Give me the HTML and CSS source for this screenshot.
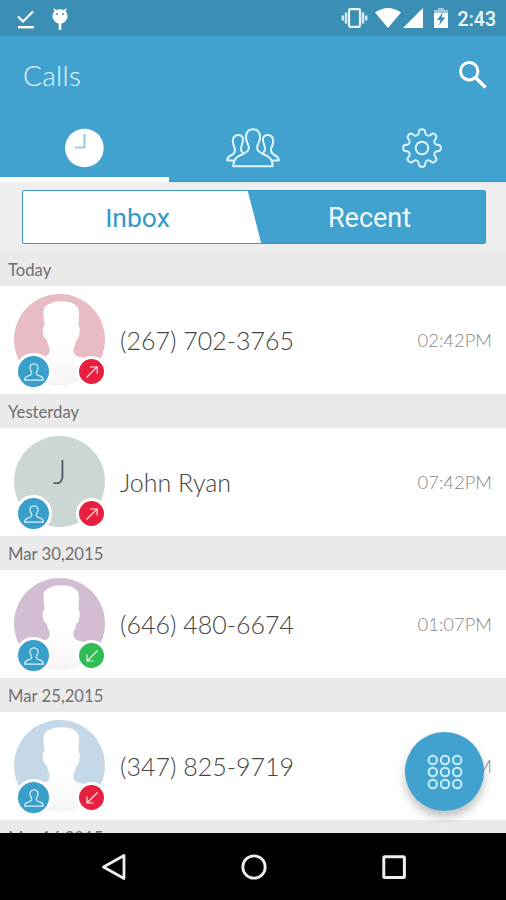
FILE: index.html
```
<!DOCTYPE html>
<html lang="en">
<head>
    <meta charset="UTF-8">
    <meta name="viewport" content="width=device-width, initial-scale=1.0">
    <title>Calls</title>
    <link rel="stylesheet" href="styles.css">
</head>
<body>
    <!-- shared shapes -->
    <svg class="defs" width="0" height="0">
        <defs>
            <linearGradient id="bodyFade" x1="0" y1="0" x2="0" y2="1">
                <stop offset="0.55" stop-color="#ffffff"/>
                <stop offset="1" stop-color="#f5f5f5"/>
            </linearGradient>
            <clipPath id="round"><circle cx="45.5" cy="45.5" r="45.5"/></clipPath>
            <symbol id="face" viewBox="0 0 91 91">
                <g clip-path="url(#round)">
                    <path fill="url(#bodyFade)" d="M30.500 32 L29.500 20 Q29 14 32 12 Q34 9.500 37 9.500 Q40 7 47 7.200 Q55 7.200 59 9.500 Q65 12.500 65 18 L64.500 32 Q66.500 33 65.500 39 Q64.800 45 62.500 45.500 Q61.500 51 59.500 54 L59.500 58 Q60.500 62 66 63 Q80 65 86 74 L88 91 L3 91 L5 74 Q11 65 28 63 Q34.500 62 35.500 58 L35.500 54 Q33.500 51 32.800 45.500 Q30 45 28.800 39 Q28 33 30.500 32 Z"/>
                </g>
            </symbol>
            <symbol id="person" viewBox="0 0 20 18">
                <path fill="none" stroke="#d9f3ff" stroke-width="1.200" stroke-linejoin="round" d="M10 .8 C7 .8 5.800 2.800 6 5.200 C6.100 7 6.900 7.800 7.500 9 C8.300 11.200 7.200 12 4.500 12.900 C2 13.600 .7 14.300 .7 17.200 H19.300 C19.300 14.300 18 13.600 15.500 12.900 C12.800 12 11.700 11.200 12.500 9 C13.100 7.800 13.900 7 14 5.200 C14.200 2.800 13 .8 10 .8 Z"/>
            </symbol>
            <symbol id="arrowOut" viewBox="0 0 14 14">
                <path fill="none" stroke="#ffdfe5" stroke-width="1.200" d="M1.500 12.500 L12.500 1.500 M5 2 H12.200 V8.500"/>
            </symbol>
            <symbol id="arrowIn" viewBox="0 0 14 14">
                <path fill="none" stroke="#ffe6ea" stroke-width="1.200" d="M12.500 1.500 L2 12 M2 5.500 V12 H8.500"/>
            </symbol>
            <path id="tooth" d="M-5.200 -12.500 Q-3.600 -13.200 -3.300 -15.200 L-3 -17 Q-2.600 -18.800 0 -18.800 Q2.600 -18.800 3 -17 L3.300 -15.200 Q3.600 -13.200 5.200 -12.500"/>
        </defs>
    </svg>

    <div class="phone">
        <div class="statusbar">
            <svg class="icon-done" width="18" height="20" viewBox="0 0 18 20">
                <path fill="none" stroke="#fff" stroke-width="2.200" d="M1 6.500 L6 11.500 L16 1.500"/>
                <rect x="1" y="16" width="16" height="2.400" fill="#fff"/>
            </svg>
            <svg class="icon-bug" width="18" height="24" viewBox="0 0 18 24">
                <path fill="#fff" d="M2.500 1 L5 3 Q9 1.500 13 3 L15.500 1 L15 5 Q17.500 8 16 11.500 Q14 16 10.300 16.500 V23 H7.700 V16.500 Q4 16 2 11.500 Q.5 8 3 5 Z"/>
                <circle cx="6" cy="7" r="1" fill="#3b8fb4"/>
                <circle cx="12" cy="7" r="1" fill="#3b8fb4"/>
            </svg>
            <span class="spacer"></span>
            <svg width="27" height="20" viewBox="0 0 27 20">
                <rect x="8" y="1.200" width="11" height="17.600" rx="1.200" fill="none" stroke="#e9f7fd" stroke-width="2.200"/>
                <path stroke="#d6edf7" stroke-width="2.400" d="M5 4.500 V15.500 M22 4.500 V15.500 M1.800 7.500 V12.500 M25.200 7.500 V12.500"/>
            </svg>
            <svg class="icon-wifi" width="26" height="20" viewBox="0 0 26 20">
                <path fill="#fff" d="M0 4.500 Q13 -4.500 26 4.500 L13 20 Z"/>
            </svg>
            <svg class="icon-signal" width="20" height="20" viewBox="0 0 20 20">
                <path fill="#fff" d="M20 0 V20 H0 Z"/>
            </svg>
            <svg class="icon-battery" width="14" height="20" viewBox="0 0 14 20">
                <path fill="#9cc9dd" d="M4 0 H10 V2 H14 V5 H0 V2 H4 Z"/>
                <path fill="#fff" d="M0 5 H14 V20 H0 Z"/>
                <path fill="#3b8fb4" d="M9 4 L3 12 H6.500 L5 17.500 L11.200 9.500 H7.700 Z"/>
            </svg>
            <span class="clock">2:43</span>
        </div>

        <div class="header">
            <div class="titlebar">
                <h1>Calls</h1>
                <svg width="30" height="30" viewBox="0 0 30 30">
                    <circle cx="11.200" cy="11.200" r="8.700" fill="none" stroke="#fff" stroke-width="3"/>
                    <path stroke="#fff" stroke-width="3.600" d="M17.500 17.500 L27.500 27.500"/>
                </svg>
            </div>
            <div class="tabs">
                <div class="tab active">
                    <svg width="40" height="40" viewBox="0 0 40 40">
                        <circle cx="20.400" cy="20" r="19.300" fill="#fff"/>
                        <path fill="none" stroke="#9bcfe6" stroke-width="2.200" d="M20.500 6 V19.500 H11"/>
                    </svg>
                </div>
                <div class="tab">
                    <svg width="54" height="40" viewBox="0 0 54 40">
                        <g fill="none" stroke="#dff6ff" stroke-width="2" stroke-linejoin="round" stroke-linecap="round">
                            <path d="M27 1.200 C22 1.200 19.800 5 20 9.500 C20.100 13.500 21.500 15 22.500 17.500 C23.500 22 22 23.500 17 26 C11 28.500 7.500 30.500 7.300 38.300 H46.700 C46.500 30.500 43 28.500 37 26 C32 23.500 30.500 22 31.500 17.500 C32.500 15 33.900 13.500 34 9.500 C34.200 5 32 1.200 27 1.200 Z"/>
                            <path d="M16.500 9 C13.500 5.500 7 6.500 6.800 13 C6.700 17 8.500 18.500 9 21.500 C9.300 25 7 26.500 4 28 C1.800 29.200 1.200 30.500 1.200 32.500 H7 M17 10.500 C17.500 14 15.500 17 15 20 C14.800 22 15.500 23.500 16.500 24.500"/>
                            <path d="M37.500 9 C40.500 5.500 47 6.500 47.200 13 C47.300 17 45.500 18.500 45 21.500 C44.700 25 47 26.500 50 28 C52.200 29.200 52.800 30.500 52.800 32.500 H47 M37 10.500 C36.500 14 38.500 17 39 20 C39.200 22 38.500 23.500 37.500 24.500"/>
                        </g>
                    </svg>
                </div>
                <div class="tab">
                    <svg width="40" height="40" viewBox="-20 -20 40 40">
                        <g fill="none" stroke="#dff6ff" stroke-width="1.900">
                            <use href="#tooth"/>
                            <use href="#tooth" transform="rotate(45)"/>
                            <use href="#tooth" transform="rotate(90)"/>
                            <use href="#tooth" transform="rotate(135)"/>
                            <use href="#tooth" transform="rotate(180)"/>
                            <use href="#tooth" transform="rotate(225)"/>
                            <use href="#tooth" transform="rotate(270)"/>
                            <use href="#tooth" transform="rotate(315)"/>
                            <circle r="6.300"/>
                        </g>
                    </svg>
                </div>
            </div>
        </div>

        <div class="filter">
            <div class="switch">
                <button class="inbox">Inbox</button>
                <button class="recent">Recent</button>
            </div>
        </div>

        <div class="list">
            <div class="day">Today</div>
            <div class="call">
                <div class="avatar pink">
                    <svg class="face"><use href="#face"/></svg>
                    <span class="badge contact"><svg><use href="#person"/></svg></span>
                    <span class="badge way red"><svg><use href="#arrowOut"/></svg></span>
                </div>
                <span class="name">(267) 702-3765</span>
                <span class="time">02:42PM</span>
            </div>

            <div class="day">Yesterday</div>
            <div class="call">
                <div class="avatar sage">
                    <span class="letter">J</span>
                    <span class="badge contact"><svg><use href="#person"/></svg></span>
                    <span class="badge way red"><svg><use href="#arrowOut"/></svg></span>
                </div>
                <span class="name">John Ryan</span>
                <span class="time">07:42PM</span>
            </div>

            <div class="day">Mar 30,2015</div>
            <div class="call">
                <div class="avatar mauve">
                    <svg class="face"><use href="#face"/></svg>
                    <span class="badge contact"><svg><use href="#person"/></svg></span>
                    <span class="badge way green"><svg><use href="#arrowIn"/></svg></span>
                </div>
                <span class="name">(646) 480-6674</span>
                <span class="time">01:07PM</span>
            </div>

            <div class="day">Mar 25,2015</div>
            <div class="call">
                <div class="avatar blue">
                    <svg class="face"><use href="#face"/></svg>
                    <span class="badge contact"><svg><use href="#person"/></svg></span>
                    <span class="badge way red"><svg><use href="#arrowIn"/></svg></span>
                </div>
                <span class="name">(347) 825-9719</span>
                <span class="time">01:07PM</span>
            </div>

            <div class="day">Mar 16,2015</div>
        </div>

        <div class="navbar">
            <svg width="26" height="28" viewBox="0 0 26 28">
                <path fill="none" stroke="#eee" stroke-width="2.800" stroke-linejoin="round" d="M2.500 14 L23 2.500 V25.500 Z"/>
            </svg>
            <svg width="26" height="28" viewBox="0 0 26 28">
                <circle cx="13" cy="14" r="11.200" fill="none" stroke="#eee" stroke-width="2.800"/>
            </svg>
            <svg width="26" height="28" viewBox="0 0 26 28">
                <rect x="2.800" y="3.800" width="20.600" height="20.600" rx="1" fill="none" stroke="#eee" stroke-width="3"/>
            </svg>
        </div>

        <button class="dialpad">
            <svg width="36" height="36" viewBox="0 0 36 36">
                <g fill="none" stroke="#cdf0ff" stroke-width="2">
                    <circle cx="5.800" cy="6" r="4.200"/><circle cx="18" cy="6" r="4.200"/><circle cx="30.200" cy="6" r="4.200"/>
                    <circle cx="5.800" cy="18" r="4.200"/><circle cx="18" cy="18" r="4.200"/><circle cx="30.200" cy="18" r="4.200"/>
                    <circle cx="5.800" cy="30" r="4.200"/><circle cx="18" cy="30" r="4.200"/><circle cx="30.200" cy="30" r="4.200"/>
                </g>
            </svg>
        </button>
    </div>
</body>
</html>
```
FILE: styles.css
```
* {
    box-sizing: border-box;
}
body {
    margin: 0;
    font-family: Lato, sans-serif;
    font-weight: 300;
    background-color: #eee;
}
svg {
    display: block;
    flex-shrink: 0;
}
.defs {
    position: absolute;
}
.phone {
    position: relative;
    display: flex;
    flex-direction: column;
    width: 506px;
    height: 900px;
    overflow: hidden;
}
.statusbar {
    display: flex;
    align-items: center;
    height: 36px;
    padding: 0 10px 0 17px;
    background-color: #3b8fb4;
}
.icon-done {
    margin-top: 4px;
}
.icon-bug {
    margin-left: 16px;
    margin-top: 2px;
}
.spacer {
    flex: 1;
}
.icon-wifi {
    margin-left: 7px;
}
.icon-signal {
    margin-left: 2px;
}
.icon-battery {
    margin-left: 11px;
}
.clock {
    margin-left: 10px;
    font: 500 19.5px/36px Roboto, sans-serif;
    color: #eefaff;
    padding-top: 3px;
}
.header {
    height: 146px;
    background-color: #42a2cf;
}
.titlebar {
    display: flex;
    justify-content: space-between;
    align-items: center;
    height: 78px;
    padding: 0 18px 0 23px;
}
.titlebar h1 {
    margin: 0 0 1px;
    font-size: 28px;
    font-weight: 300;
    letter-spacing: 0.3px;
    color: #e6f7ff;
}
.tabs {
    display: flex;
    height: 68px;
    border-bottom: 1px solid #2e93c4;
}
.tab {
    flex: 1;
    display: flex;
    justify-content: center;
    padding-top: 14px;
}
.tab.active {
    height: 68px;
    border-bottom: 5px solid #fff;
}
.filter {
    height: 70px;
    padding: 8px 20px 0 22px;
    background-color: #eee;
}
.switch {
    display: grid;
    grid-template-columns: 1fr 1fr;
    height: 54px;
    border: 1px solid #3a98c6;
    border-radius: 2px;
    /* slanted split between the two halves */
    background: linear-gradient(75.6deg, #fff 50%, #42a2cf 50.2%);
}
.switch button {
    border: none;
    padding: 2px 0 0;
    background: none;
    font: 400 27px Roboto, sans-serif;
}
.switch .inbox {
    color: #3398c9;
    font-size: 26.5px;
    padding: 0 2px 0 0;
}
.switch .recent {
    color: #eefaff;
}
.list {
    flex: 1;
    overflow: hidden;
    background-color: #fff;
}
.day {
    height: 34px;
    padding-left: 8px;
    background-color: #eaeaea;
    color: #707070;
    font-size: 16.7px;
    line-height: 36px;
    font-weight: 400;
}
.call {
    display: flex;
    align-items: center;
    height: 108px;
    padding: 0 14px 1px;
}
.avatar {
    position: relative;
    width: 91px;
    height: 91px;
    border-radius: 50%;
    text-align: center;
}
.pink {
    background-color: #e8bcc4;
}
.sage {
    background-color: #cbd7d2;
}
.mauve {
    background-color: #d3bdd2;
}
.blue {
    background-color: #c5d8e8;
}
.face {
    width: 91px;
    height: 91px;
}
.letter {
    font-size: 33px;
    line-height: 70px;
    color: #555;
}
.badge {
    position: absolute;
    display: flex;
    align-items: center;
    justify-content: center;
    border: 3px solid #fff;
    border-radius: 50%;
}
.contact {
    left: 1px;
    bottom: -5px;
    width: 37px;
    height: 37px;
    background-color: #389fca;
}
.contact svg {
    width: 20px;
    height: 18px;
}
.way {
    right: -2px;
    bottom: -2px;
    width: 31px;
    height: 31px;
    background-color: #e8203f;
}
.way.green {
    background-color: #2fbd55;
}
.way svg {
    width: 14px;
    height: 14px;
}
.name {
    flex: 1;
    margin-left: 15px;
    font-size: 25px;
    color: #444;
}
.time {
    font-size: 18.4px;
    color: #888;
}
.navbar {
    display: flex;
    justify-content: center;
    align-items: center;
    gap: 114px;
    height: 67px;
    padding-left: 1px;
    background-color: #000;
}
.dialpad {
    position: absolute;
    left: 405px;
    top: 732px;
    display: flex;
    align-items: center;
    justify-content: center;
    width: 79px;
    height: 79px;
    padding: 0;
    border: none;
    border-radius: 50%;
    background-color: #42a2cf;
    box-shadow: 0 6px 10px rgba(0, 0, 0, 0.25);
}
```
